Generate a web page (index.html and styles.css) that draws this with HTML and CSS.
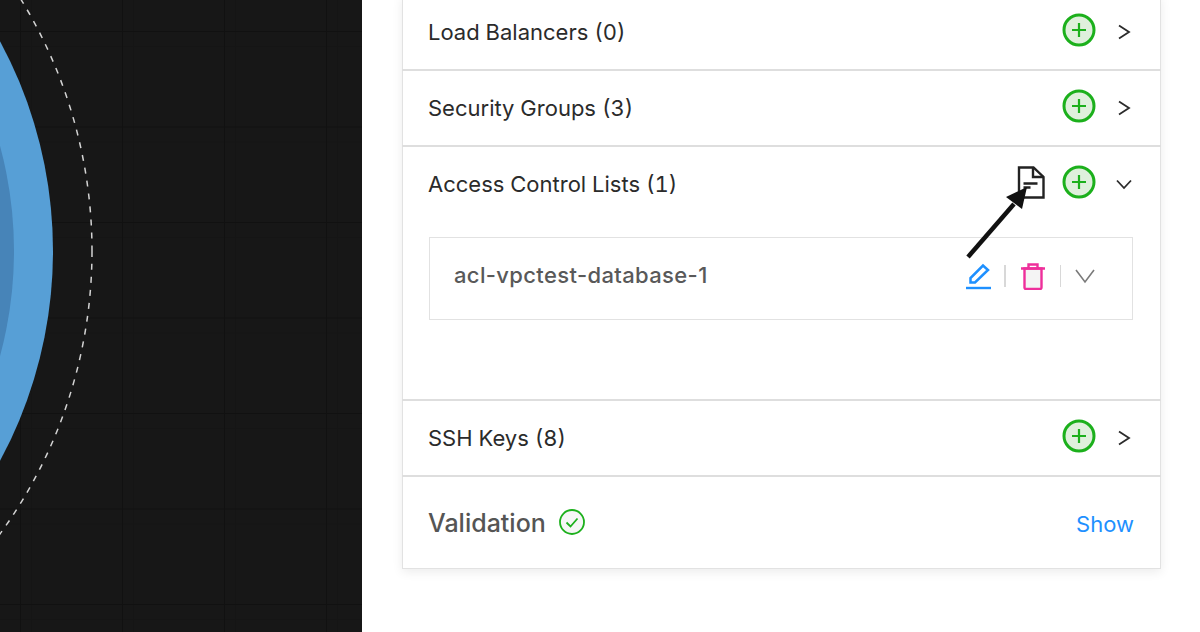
FILE: index.html
```html
<!DOCTYPE html>
<html lang="en">
<head>
<meta charset="utf-8">
<title>VPC resources</title>
<link rel="stylesheet" href="styles.css">
</head>
<body>
<div class="page">
  <aside class="canvas">
    <svg class="diagram" width="362" height="632" viewBox="0 0 362 632">
      <circle cx="-389" cy="251" r="442" fill="#579fd6"/>
      <circle cx="-389" cy="251" r="403" fill="#4784b8"/>
      <circle cx="-389" cy="251" r="481" fill="none" stroke="#d4d4d4" stroke-width="1.500" stroke-dasharray="6 7"/>
    </svg>
  </aside>
  <main class="main">
    <section class="card">
      <div class="row">
        <span class="label">Load Balancers (0)</span>
        <div class="actions">
          <svg class="plus" width="34" height="34" viewBox="0 0 34 34"><circle cx="17" cy="17" r="15" class="plus-disc"/><path d="M10 17h14M17 10v14" class="plus-mark"/></svg>
          <svg class="chev" width="16" height="16" viewBox="0 0 16 16"><path d="M3 1.500 13 8 3 14.500" class="chev-line"/></svg>
        </div>
      </div>
      <div class="row">
        <span class="label">Security Groups (3)</span>
        <div class="actions">
          <svg class="plus" width="34" height="34" viewBox="0 0 34 34"><circle cx="17" cy="17" r="15" class="plus-disc"/><path d="M10 17h14M17 10v14" class="plus-mark"/></svg>
          <svg class="chev" width="16" height="16" viewBox="0 0 16 16"><path d="M3 1.500 13 8 3 14.500" class="chev-line"/></svg>
        </div>
      </div>
      <div class="group">
        <div class="row row-bare">
          <span class="label">Access Control Lists (1)</span>
          <div class="actions">
            <svg class="file" width="28" height="33" viewBox="0 0 28 33"><path d="M2 1.500h14.500L26.500 11v20.500H2z" class="file-line"/><path d="M16 1.500V11h10.500M6.500 17.500h14M6.500 21.500h7" class="file-line"/></svg>
            <svg class="plus" width="34" height="34" viewBox="0 0 34 34"><circle cx="17" cy="17" r="15" class="plus-disc"/><path d="M10 17h14M17 10v14" class="plus-mark"/></svg>
            <svg class="chev" width="16" height="16" viewBox="0 0 16 16"><path d="M1 4.500 8 12l7-7.500" class="chev-line"/></svg>
          </div>
        </div>
        <div class="item">
          <span class="item-name">acl-vpctest-database-1</span>
          <div class="item-actions">
            <svg class="edit" width="28" height="28" viewBox="0 0 28 28"><path d="M5.500 20.500V16L18 3.500 23 8 10 20.500z" class="edit-line"/><path d="M1 26h25" class="edit-under"/></svg>
            <span class="tick"></span>
            <svg width="26" height="28" viewBox="0 0 26 28"><path d="M4.500 6.500V25.500q0 1.500 1.500 1.500h14q1.500 0 1.500-1.500V6.500z" class="trash-body"/><path d="M1 6.500h24M8.500 6V2.500h9V6" class="trash-line"/></svg>
            <span class="tick"></span>
            <svg width="20" height="16" viewBox="0 0 20 16"><path d="M1 2l9 12 9-12" class="down-line"/></svg>
          </div>
        </div>
      </div>
      <div class="row">
        <span class="label">SSH Keys (8)</span>
        <div class="actions">
          <svg class="plus" width="34" height="34" viewBox="0 0 34 34"><circle cx="17" cy="17" r="15" class="plus-disc"/><path d="M10 17h14M17 10v14" class="plus-mark"/></svg>
          <svg class="chev" width="16" height="16" viewBox="0 0 16 16"><path d="M3 1.500 13 8 3 14.500" class="chev-line"/></svg>
        </div>
      </div>
      <div class="validation">
        <div class="valid-left">
          <span class="valid-title">Validation</span>
          <svg class="check" width="26" height="26" viewBox="0 0 26 26"><circle cx="13" cy="13" r="12" class="check-ring"/><path d="M7.500 13.500l4 4 7-8" class="check-mark"/></svg>
        </div>
        <a class="show">Show</a>
      </div>
    </section>
  </main>
</div>
<svg class="pointer" width="80" height="90" viewBox="0 0 80 90"><path d="M8 78 54 25" class="pointer-shaft"/><path d="M67 8 46 18l16 12z" class="pointer-head"/></svg>
</body>
</html>
```

FILE: styles.css
```css
* { box-sizing: border-box; }
html, body { margin: 0; height: 632px; overflow: hidden; background: #fff; }
body { font-family: Inter, "Liberation Sans", sans-serif; color: #2b2b2b; position: relative; }
.page { display: flex; height: 632px; }
.canvas {
  width: 362px; flex: none; height: 632px; background-color: #171717;
  background-image:
    linear-gradient(90deg, #111 0 1.500px, transparent 1.500px),
    linear-gradient(#111 0 1px, transparent 1px),
    linear-gradient(90deg, #151515 0 1px, transparent 1px),
    linear-gradient(#151515 0 1px, transparent 1px);
  background-size: 102px 100%, 100% 95.500px, 102px 100%, 100% 95.500px;
  background-position: 20px 0, 0 31px, 31px 0, 0 46px;
}
.diagram { display: block; }
.main { flex: 1; padding-left: 40px; }
.card {
  width: 759px; margin-top: -5px; background: #fff;
  box-shadow: inset 0 0 0 1px #e2e2e2, 0 3px 10px rgba(0,0,0,.08);
}
.row {
  height: 76px; display: flex; align-items: center; justify-content: space-between;
  padding: 0 29px 0 26px; border-bottom: 2px solid #dedede;
}
.row-bare { border-bottom: 0; height: 74px; }
.label { font-size: 22px; color: #2b2b2b; font-feature-settings: "tnum"; }
.actions { display: flex; align-items: center; gap: 20px; margin-top: -4px; }
.chev { margin-top: 3px; }
.plus-disc { fill: #dff0dc; stroke: #1cb01c; stroke-width: 3; }
.plus-mark { stroke: #1cb01c; stroke-width: 2.200; fill: none; }
.chev-line { fill: none; stroke: #2b2b2b; stroke-width: 1.800; }
.file { margin-right: -3px; }
.file-line { fill: none; stroke: #222; stroke-width: 2.400; }
.group { height: 254px; border-bottom: 2px solid #dedede; }
.item {
  height: 83px; margin: 16px 28px 0 27px; padding: 0 37px 0 24px;
  border: 1.500px solid #e2e2e2; display: flex; align-items: center; justify-content: space-between;
}
.item-name { font-size: 22px; font-weight: 500; color: #595959; margin-top: -7px; letter-spacing: .36px; }
.item-actions { display: flex; align-items: center; gap: 14px; margin-top: -6px; }
.edit { margin-right: -3px; }
.tick { width: 1.500px; height: 22px; background: #d8d8d8; }
.edit-line { fill: #fff; stroke: #1e90ff; stroke-width: 2.500; }
.edit-under { stroke: #1e90ff; stroke-width: 2.400; fill: none; }
.trash-body { fill: #f4f4f4; stroke: #ee2f9b; stroke-width: 2.400; }
.trash-line { fill: none; stroke: #ee2f9b; stroke-width: 2.400; }
.down-line { fill: none; stroke: #7a7a7a; stroke-width: 1.600; }
.validation { height: 92px; display: flex; align-items: center; justify-content: space-between; padding: 0 27px 0 26px; }
.valid-left { display: flex; align-items: center; gap: 13px; }
.valid-title { font-size: 25px; font-weight: 500; color: #555; }
.check { margin-top: -3px; }
.check-ring { fill: #f6f6f6; stroke: #1cb01c; stroke-width: 1.800; }
.check-mark { fill: none; stroke: #1cb01c; stroke-width: 1.800; }
.show { font-size: 22px; color: #1e90ff; margin-top: 2px; }
.pointer { position: absolute; left: 960px; top: 179px; }
.pointer-shaft { stroke: #111; stroke-width: 4.500; fill: none; }
.pointer-head { fill: #111; }
```
